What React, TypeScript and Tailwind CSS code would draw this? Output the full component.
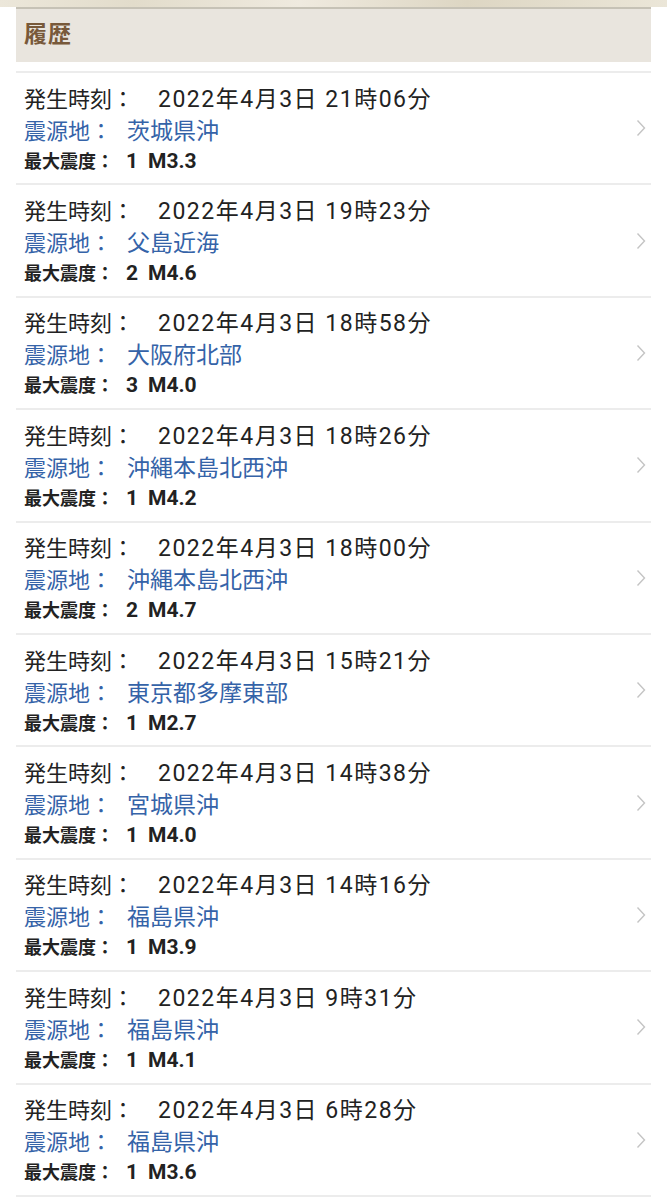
const quakes = [
  { time: '21時06分', place: '茨城県沖', shindo: '1', mag: 'M3.3' },
  { time: '19時23分', place: '父島近海', shindo: '2', mag: 'M4.6' },
  { time: '18時58分', place: '大阪府北部', shindo: '3', mag: 'M4.0' },
  { time: '18時26分', place: '沖縄本島北西沖', shindo: '1', mag: 'M4.2' },
  { time: '18時00分', place: '沖縄本島北西沖', shindo: '2', mag: 'M4.7' },
  { time: '15時21分', place: '東京都多摩東部', shindo: '1', mag: 'M2.7' },
  { time: '14時38分', place: '宮城県沖', shindo: '1', mag: 'M4.0' },
  { time: '14時16分', place: '福島県沖', shindo: '1', mag: 'M3.9' },
  { time: '9時31分', place: '福島県沖', shindo: '1', mag: 'M4.1' },
  { time: '6時28分', place: '福島県沖', shindo: '1', mag: 'M3.6' },
]

function Chevron() {
  return (
    <svg width="10" height="18" viewBox="0 0 10 18" fill="none" className="shrink-0">
      <path d="M1.5 1.5 L8.5 9 L1.5 16.5" stroke="#c4c4c4" strokeWidth="1.4" />
    </svg>
  )
}

export default function App() {
  return (
    <div className="w-[667px] h-[1200px] bg-white overflow-hidden font-['Roboto','Noto_Sans_CJK_JP',sans-serif]">
      {/* decorative band */}
      <div className="h-[7px] bg-[linear-gradient(90deg,#ece7da,#e2dccb_20%,#efeadf_45%,#ddd6c3_70%,#ebe6d8)]" />

      <div className="px-4">
        {/* Header */}
        <div className="h-[55px] border-t-2 border-[#c6c2b6] bg-[#e9e5de] flex items-center px-2">
          <h1 className="text-[23px] font-bold text-[#78593a] tracking-[1px]">履歴</h1>
        </div>

        {/* List */}
        <ul className="mt-[9px] border-t-2 border-[#ececec]">
          {quakes.map((q) => (
            <li
              key={q.time}
              className="h-[112.4px] border-b-2 border-[#ececec] flex items-center pl-2 pr-[5px]"
            >
              <div className="flex-1 flex flex-col">
                <div className="pt-[3px] leading-[30px] text-[#222] whitespace-nowrap">
                  <span className="text-[22px]">発生時刻：</span>
                  <span className="ml-[24px] text-[23px] tracking-[1.5px]">2022年4月3日 {q.time}</span>
                </div>
                <div className="leading-[30px] text-[#3563a8] whitespace-nowrap">
                  <span className="text-[22px]">震源地：</span>
                  <span className="ml-[15px] text-[23px]">{q.place}</span>
                </div>
                <div className="leading-[25px] font-bold text-[#222] whitespace-nowrap">
                  <span className="text-[18px]">最大震度：</span>
                  <span className="ml-[12px] text-[21px]">{q.shindo}</span>
                  <span className="ml-[10px] text-[21px]">{q.mag}</span>
                </div>
              </div>
              <Chevron />
            </li>
          ))}
        </ul>
      </div>
    </div>
  )
}
